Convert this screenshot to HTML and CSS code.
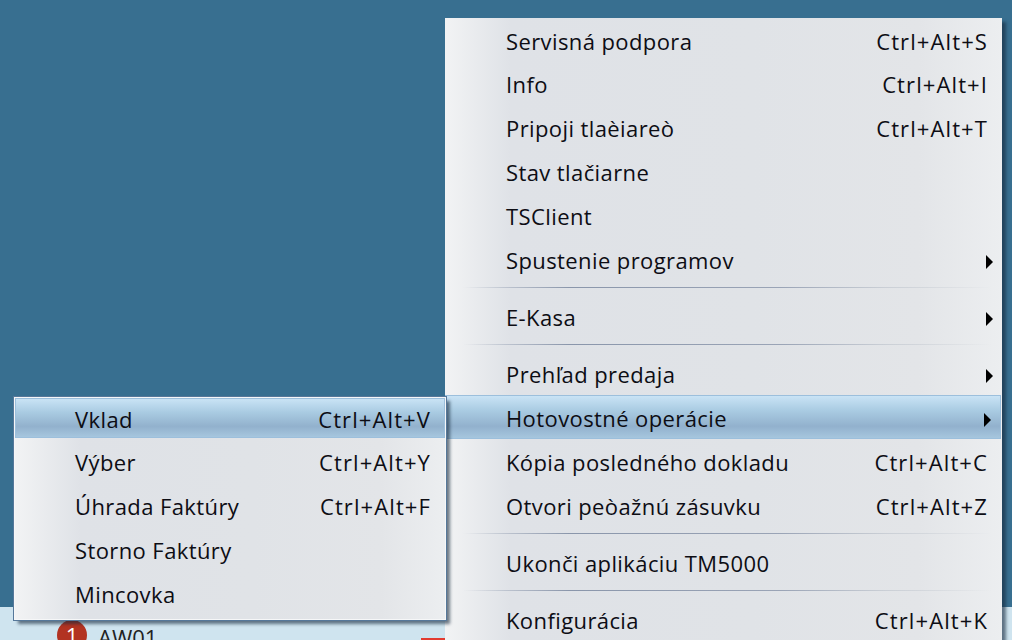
FILE: index.html
```html
<!DOCTYPE html>
<html>

<head>
    <title>TM5000</title>
    <link rel="stylesheet" href="styles.css">
</head>

<body>
    <div class="screen">
        <div class="desktop"></div>
        <div class="status-strip">
            <span class="badge">1</span>
            <span class="user">AW01</span>
            <span class="flag"></span>
        </div>

        <div class="menu menu-main">
            <div class="item first"><span class="label">Servisná podpora</span><span class="keys">Ctrl+Alt+S</span></div>
            <div class="item"><span class="label">Info</span><span class="keys">Ctrl+Alt+I</span></div>
            <div class="item"><span class="label">Pripoji tlaèiareò</span><span class="keys">Ctrl+Alt+T</span></div>
            <div class="item"><span class="label">Stav tlačiarne</span></div>
            <div class="item"><span class="label">TSClient</span></div>
            <div class="item"><span class="label">Spustenie programov</span><span class="arrow"></span></div>
            <div class="sep"></div>
            <div class="item"><span class="label">E-Kasa</span><span class="arrow"></span></div>
            <div class="sep"></div>
            <div class="item"><span class="label">Prehľad predaja</span><span class="arrow"></span></div>
            <div class="item active"><span class="label">Hotovostné operácie</span><span class="arrow"></span></div>
            <div class="item"><span class="label">Kópia posledného dokladu</span><span class="keys">Ctrl+Alt+C</span></div>
            <div class="item"><span class="label">Otvori peòažnú zásuvku</span><span class="keys">Ctrl+Alt+Z</span></div>
            <div class="sep"></div>
            <div class="item"><span class="label">Ukonči aplikáciu TM5000</span></div>
            <div class="sep"></div>
            <div class="item"><span class="label">Konfigurácia</span><span class="keys">Ctrl+Alt+K</span></div>
        </div>

        <div class="menu menu-sub">
            <div class="item active first"><span class="label">Vklad</span><span class="keys">Ctrl+Alt+V</span></div>
            <div class="item"><span class="label">Výber</span><span class="keys">Ctrl+Alt+Y</span></div>
            <div class="item"><span class="label">Úhrada Faktúry</span><span class="keys">Ctrl+Alt+F</span></div>
            <div class="item"><span class="label">Storno Faktúry</span></div>
            <div class="item"><span class="label">Mincovka</span></div>
        </div>
    </div>
</body>

</html>
```

FILE: styles.css
```css
* {
    box-sizing: border-box;
}

body {
    margin: 0;
    font-family: "Open Sans", "Noto Sans", sans-serif;
    color: #0d0d14;
}

.screen {
    position: relative;
    width: 1012px;
    height: 640px;
    overflow: hidden;
    display: flex;
    flex-direction: column;
}

.desktop {
    flex: none;
    height: 607px;
    background: #386f90;
}

.status-strip {
    flex: none;
    height: 33px;
    display: flex;
    align-items: flex-start;
    background: #cfe4ef;
    padding: 13px 0 0 57px;
    font-size: 22px;
}

.badge {
    flex: none;
    width: 30px;
    height: 30px;
    border-radius: 50%;
    background: #b23322;
    color: #fff;
    text-align: center;
    line-height: 30px;
}

.user {
    margin: 2px 0 0 11px;
    line-height: 30px;
    color: #222;
}

.flag {
    margin: 18px 0 0 264px;
    width: 24px;
    height: 10px;
    background: #e23b30;
}

.menu {
    position: absolute;
    background: linear-gradient(to right, #f2f3f4 0, #dfe2e7 65px, #e0e3e7 55%, #e3e5e8 85%, #eceef0 100%);
    border: 1px solid #f6f7f8;
    box-shadow: 4px 4px 3px rgba(20, 40, 60, 0.6);
    font-size: 22px;
    letter-spacing: 0.4px;
}

.menu-main {
    left: 445px;
    top: 18px;
    width: 557px;
    height: 640px;
    padding-left: 60px;
    border: 0;
}

.menu-sub {
    left: 14px;
    top: 397px;
    width: 432px;
    height: 223px;
    padding-left: 59px;
    outline: 1px solid #56789a;
}

.item {
    height: 44px;
    display: flex;
    align-items: center;
    justify-content: space-between;
    padding: 2px 14px 0 1px;
    white-space: nowrap;
}

.item.first {
    height: 43px;
    padding-top: 3px;
}

.keys {
    letter-spacing: 1.1px;
}

.item.active {
    margin-left: -60px;
    padding-left: 60px;
    margin-right: 1px;
    border: 1px solid #9cbfdc;
    background: linear-gradient(to bottom, #c9e3f5 0, #a9cbe2 35%, #92b1cd 72%, #a6c6de 100%);
}

.menu-sub .item.active {
    height: 40px;
    margin: 0 0 1px -59px;
    padding: 2px 13px 0 59px;
}

.arrow {
    width: 0;
    height: 0;
    margin: 3px -5px 0 0;
    border-left: 7px solid #000;
    border-top: 7px solid transparent;
    border-bottom: 7px solid transparent;
}

.sep {
    height: 13px;
    margin-left: -42px;
    margin-right: 10px;
    padding-top: 6px;
}

.sep::before {
    content: "";
    display: block;
    height: 1px;
    background: linear-gradient(to right, rgba(130, 140, 160, 0), #8a96ab 20%, #9aa4b6 60%, rgba(200, 205, 212, 0.9) 80%, rgba(220, 222, 226, 0) 100%);
}
```
